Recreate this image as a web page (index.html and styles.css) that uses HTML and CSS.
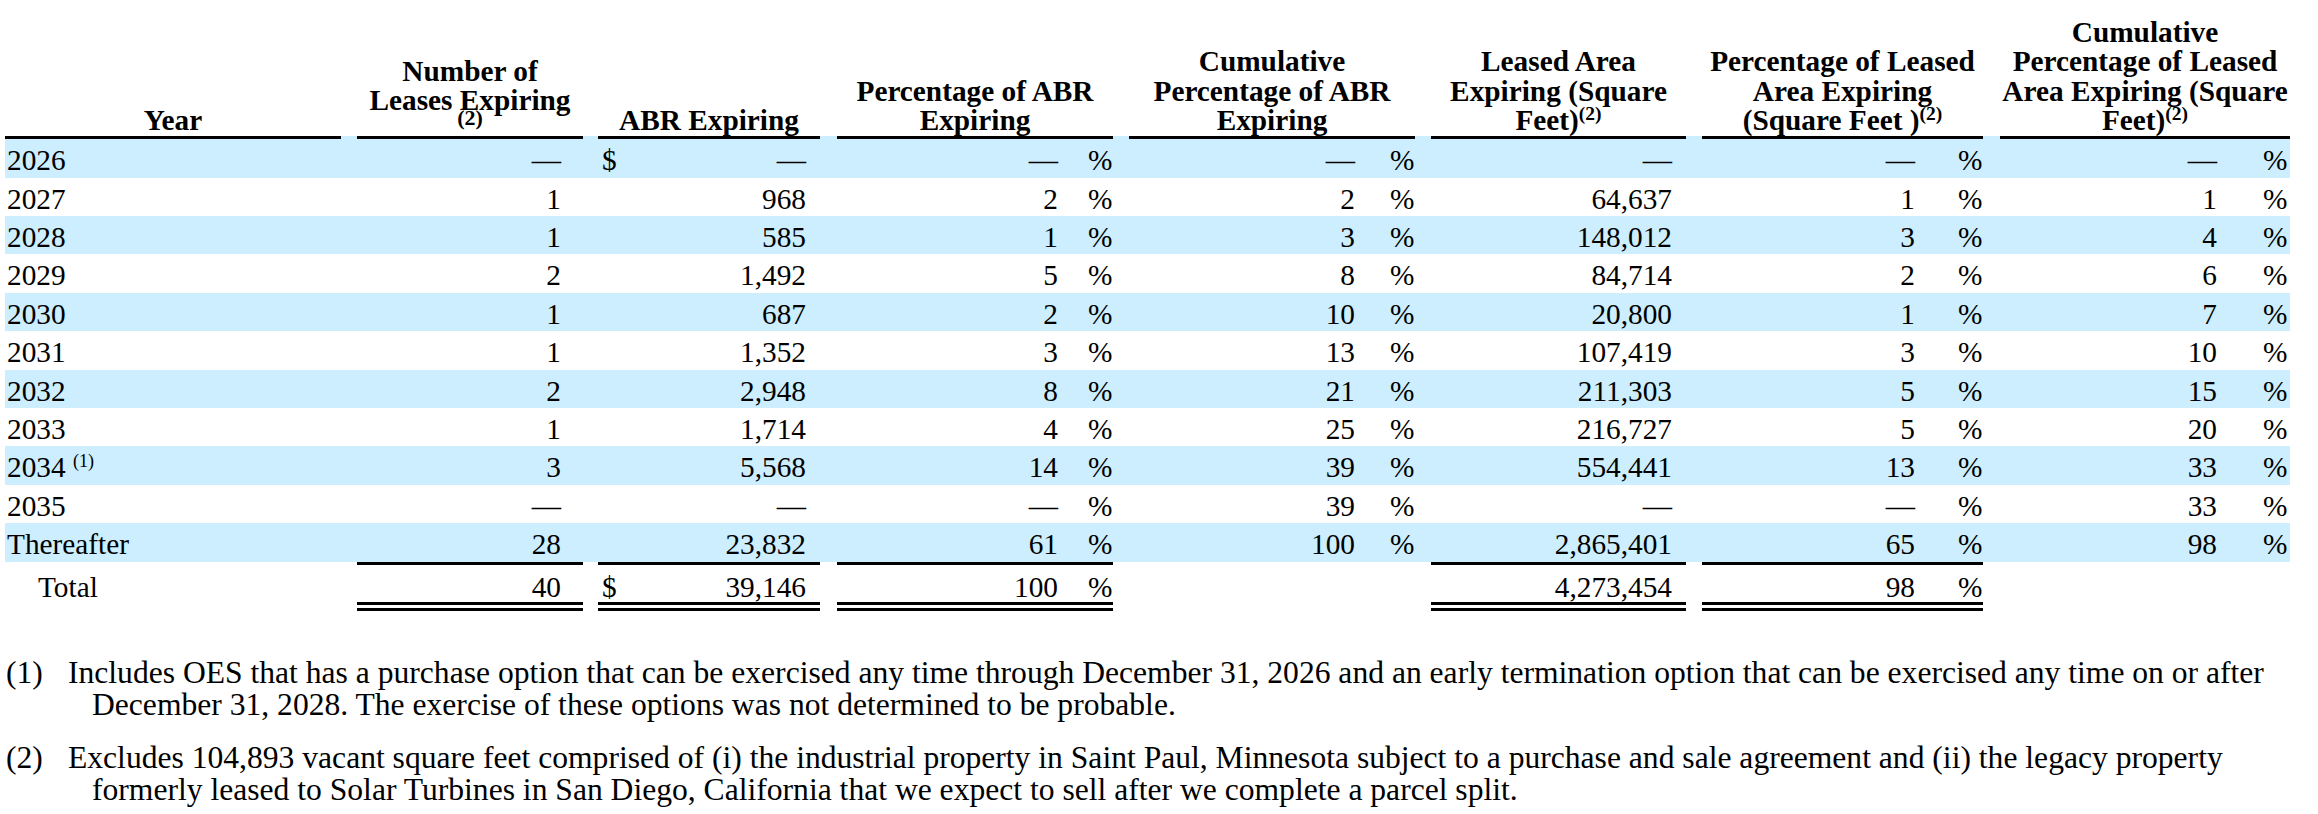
FILE: index.html
```html
<!DOCTYPE html>
<html lang="en">
<head>
<meta charset="utf-8">
<title>Lease Expirations</title>
<link rel="stylesheet" href="styles.css">
</head>
<body>
<div class="page">
  <table class="lease-table">
    <colgroup>
      <col class="w-year"><col class="w-g16"><col class="w-leases"><col class="w-g15"><col class="w-abr"><col class="w-g17">
      <col class="w-pabr"><col class="w-pct25"><col class="w-g16"><col class="w-cabr"><col class="w-pct25"><col class="w-g16">
      <col class="w-area"><col class="w-g16"><col class="w-parea"><col class="w-pct25"><col class="w-g17"><col class="w-carea"><col class="w-pct27">
    </colgroup>
    <thead>
      <tr>
        <th>Year</th>
        <th class="gap"></th>
        <th>Number of<br>Leases Expiring<div class="h-subline"><span class="h-sup">(2)</span></div></th>
        <th class="gap"></th>
        <th>ABR Expiring</th>
        <th class="gap"></th>
        <th colspan="2">Percentage of ABR<br>Expiring</th>
        <th class="gap"></th>
        <th colspan="2">Cumulative<br>Percentage of ABR<br>Expiring</th>
        <th class="gap"></th>
        <th>Leased Area<br>Expiring (Square<br>Feet)<span class="sup">(2)</span></th>
        <th class="gap"></th>
        <th colspan="2">Percentage of Leased<br>Area Expiring<br>(Square Feet )<span class="sup">(2)</span></th>
        <th class="gap"></th>
        <th colspan="2">Cumulative<br>Percentage of Leased<br>Area Expiring (Square<br>Feet)<span class="sup">(2)</span></th>
      </tr>
    </thead>
    <tbody>
      <tr class="alt">
        <td class="year">2026</td><td></td><td class="n-leases">—</td><td></td>
        <td class="n-abr"><span class="cur">$</span>—</td><td></td>
        <td class="n-pabr">—</td><td class="pct">%</td><td></td>
        <td class="n-cabr">—</td><td class="pct">%</td><td></td>
        <td class="n-area">—</td><td></td>
        <td class="n-parea">—</td><td class="pct">%</td><td></td>
        <td class="n-carea">—</td><td class="pct">%</td>
      </tr>
      <tr>
        <td class="year">2027</td><td></td><td class="n-leases">1</td><td></td>
        <td class="n-abr">968</td><td></td>
        <td class="n-pabr">2</td><td class="pct">%</td><td></td>
        <td class="n-cabr">2</td><td class="pct">%</td><td></td>
        <td class="n-area">64,637</td><td></td>
        <td class="n-parea">1</td><td class="pct">%</td><td></td>
        <td class="n-carea">1</td><td class="pct">%</td>
      </tr>
      <tr class="alt">
        <td class="year">2028</td><td></td><td class="n-leases">1</td><td></td>
        <td class="n-abr">585</td><td></td>
        <td class="n-pabr">1</td><td class="pct">%</td><td></td>
        <td class="n-cabr">3</td><td class="pct">%</td><td></td>
        <td class="n-area">148,012</td><td></td>
        <td class="n-parea">3</td><td class="pct">%</td><td></td>
        <td class="n-carea">4</td><td class="pct">%</td>
      </tr>
      <tr>
        <td class="year">2029</td><td></td><td class="n-leases">2</td><td></td>
        <td class="n-abr">1,492</td><td></td>
        <td class="n-pabr">5</td><td class="pct">%</td><td></td>
        <td class="n-cabr">8</td><td class="pct">%</td><td></td>
        <td class="n-area">84,714</td><td></td>
        <td class="n-parea">2</td><td class="pct">%</td><td></td>
        <td class="n-carea">6</td><td class="pct">%</td>
      </tr>
      <tr class="alt">
        <td class="year">2030</td><td></td><td class="n-leases">1</td><td></td>
        <td class="n-abr">687</td><td></td>
        <td class="n-pabr">2</td><td class="pct">%</td><td></td>
        <td class="n-cabr">10</td><td class="pct">%</td><td></td>
        <td class="n-area">20,800</td><td></td>
        <td class="n-parea">1</td><td class="pct">%</td><td></td>
        <td class="n-carea">7</td><td class="pct">%</td>
      </tr>
      <tr>
        <td class="year">2031</td><td></td><td class="n-leases">1</td><td></td>
        <td class="n-abr">1,352</td><td></td>
        <td class="n-pabr">3</td><td class="pct">%</td><td></td>
        <td class="n-cabr">13</td><td class="pct">%</td><td></td>
        <td class="n-area">107,419</td><td></td>
        <td class="n-parea">3</td><td class="pct">%</td><td></td>
        <td class="n-carea">10</td><td class="pct">%</td>
      </tr>
      <tr class="alt">
        <td class="year">2032</td><td></td><td class="n-leases">2</td><td></td>
        <td class="n-abr">2,948</td><td></td>
        <td class="n-pabr">8</td><td class="pct">%</td><td></td>
        <td class="n-cabr">21</td><td class="pct">%</td><td></td>
        <td class="n-area">211,303</td><td></td>
        <td class="n-parea">5</td><td class="pct">%</td><td></td>
        <td class="n-carea">15</td><td class="pct">%</td>
      </tr>
      <tr>
        <td class="year">2033</td><td></td><td class="n-leases">1</td><td></td>
        <td class="n-abr">1,714</td><td></td>
        <td class="n-pabr">4</td><td class="pct">%</td><td></td>
        <td class="n-cabr">25</td><td class="pct">%</td><td></td>
        <td class="n-area">216,727</td><td></td>
        <td class="n-parea">5</td><td class="pct">%</td><td></td>
        <td class="n-carea">20</td><td class="pct">%</td>
      </tr>
      <tr class="alt">
        <td class="year">2034 <span class="sup-reg">(1)</span></td><td></td><td class="n-leases">3</td><td></td>
        <td class="n-abr">5,568</td><td></td>
        <td class="n-pabr">14</td><td class="pct">%</td><td></td>
        <td class="n-cabr">39</td><td class="pct">%</td><td></td>
        <td class="n-area">554,441</td><td></td>
        <td class="n-parea">13</td><td class="pct">%</td><td></td>
        <td class="n-carea">33</td><td class="pct">%</td>
      </tr>
      <tr>
        <td class="year">2035</td><td></td><td class="n-leases">—</td><td></td>
        <td class="n-abr">—</td><td></td>
        <td class="n-pabr">—</td><td class="pct">%</td><td></td>
        <td class="n-cabr">39</td><td class="pct">%</td><td></td>
        <td class="n-area">—</td><td></td>
        <td class="n-parea">—</td><td class="pct">%</td><td></td>
        <td class="n-carea">33</td><td class="pct">%</td>
      </tr>
      <tr class="alt">
        <td class="year">Thereafter</td><td></td><td class="n-leases">28</td><td></td>
        <td class="n-abr">23,832</td><td></td>
        <td class="n-pabr">61</td><td class="pct">%</td><td></td>
        <td class="n-cabr">100</td><td class="pct">%</td><td></td>
        <td class="n-area">2,865,401</td><td></td>
        <td class="n-parea">65</td><td class="pct">%</td><td></td>
        <td class="n-carea">98</td><td class="pct">%</td>
      </tr>
      <tr class="total">
        <td class="year total-label">Total</td><td></td><td class="n-leases rule">40</td><td></td>
        <td class="n-abr rule"><span class="cur">$</span>39,146</td><td></td>
        <td class="n-pabr rule">100</td><td class="pct rule">%</td><td></td>
        <td class="n-cabr"></td><td class="pct"></td><td></td>
        <td class="n-area rule">4,273,454</td><td></td>
        <td class="n-parea rule">98</td><td class="pct rule">%</td><td></td>
        <td class="n-carea"></td><td class="pct"></td>
      </tr>
    </tbody>
  </table>

  <div class="notes">
    <p class="note"><span class="note-num">(1)</span>Includes OES that has a purchase option that can be exercised any time through December 31, 2026 and an early termination option that can be exercised any time on or after December 31, 2028. The exercise of these options was not determined to be probable.</p>
    <p class="note"><span class="note-num">(2)</span>Excludes 104,893 vacant square feet comprised of (i) the industrial property in Saint Paul, Minnesota subject to a purchase and sale agreement and (ii) the legacy property formerly leased to Solar Turbines in San Diego, California that we expect to sell after we complete a parcel split.</p>
  </div>
</div>
</body>
</html>
```
FILE: styles.css
```css
html, body {
  margin: 0;
  padding: 0;
  background: #ffffff;
}

body {
  font-family: "Liberation Serif", "Times New Roman", serif;
  font-size: 29.3px;
  color: #000000;
}

.page {
  padding: 18px 0 0 5px;
  width: 2295px;
}

.lease-table {
  border-collapse: separate;
  border-spacing: 0;
  table-layout: fixed;
  width: 2285px;
}

.w-year { width: 336px; }
.w-g15 { width: 15px; }
.w-g16 { width: 16px; }
.w-g17 { width: 17px; }
.w-leases { width: 226px; }
.w-abr { width: 222px; }
.w-pabr { width: 251px; }
.w-cabr { width: 261px; }
.w-area { width: 255px; }
.w-parea { width: 256px; }
.w-carea { width: 263px; }
.w-pct25 { width: 25px; }
.w-pct27 { width: 27px; }

.lease-table th {
  font-weight: bold;
  text-align: center;
  vertical-align: bottom;
  line-height: 29.3px;
  padding: 0 0 1px;
  white-space: nowrap;
  border-bottom: 3px solid #000000;
}

.lease-table th.gap {
  border-bottom-color: #cceeff;
}

.h-subline {
  height: 19.6px;
  line-height: 19.6px;
  font-size: 22px;
}

.h-sup {
  line-height: 0;
  vertical-align: 8px;
}

.sup {
  font-size: 19.5px;
  line-height: 0;
  vertical-align: 10px;
}

.sup-reg {
  font-size: 18px;
  line-height: 0;
  vertical-align: 10px;
}

.lease-table td {
  padding: 4px 0 0;
  line-height: 34.4px;
  white-space: nowrap;
  text-align: right;
  vertical-align: top;
}

.lease-table tr.alt td {
  background: #cceeff;
}

.lease-table td.year {
  text-align: left;
  padding-left: 2px;
}

.lease-table td.total-label {
  padding-left: 33px;
}

.lease-table td.n-leases { padding-right: 22px; }
.lease-table td.n-abr { padding-right: 14px; }
.lease-table td.n-pabr { padding-right: 30px; }
.lease-table td.n-cabr { padding-right: 35px; }
.lease-table td.n-area { padding-right: 14px; }
.lease-table td.n-parea { padding-right: 43px; }
.lease-table td.n-carea { padding-right: 46px; }

.lease-table td.pct {
  text-align: left;
}

.cur {
  float: left;
  padding-left: 4px;
}

.lease-table tr.total td {
  padding-top: 7px;
  line-height: 30px;
  border-top: 3px solid transparent;
  border-bottom: 9px double transparent;
}

.lease-table tr.total td.rule {
  border-top-color: #000000;
  border-bottom-color: #000000;
}

.notes {
  margin-top: 46px;
  width: 2275px;
}

.note {
  margin: 0 0 21px;
  padding-left: 87px;
  text-indent: -86px;
  line-height: 32px;
  font-size: 31.6px;
}

.note-num {
  display: inline-block;
  width: 62px;
  text-indent: 0;
}
```
